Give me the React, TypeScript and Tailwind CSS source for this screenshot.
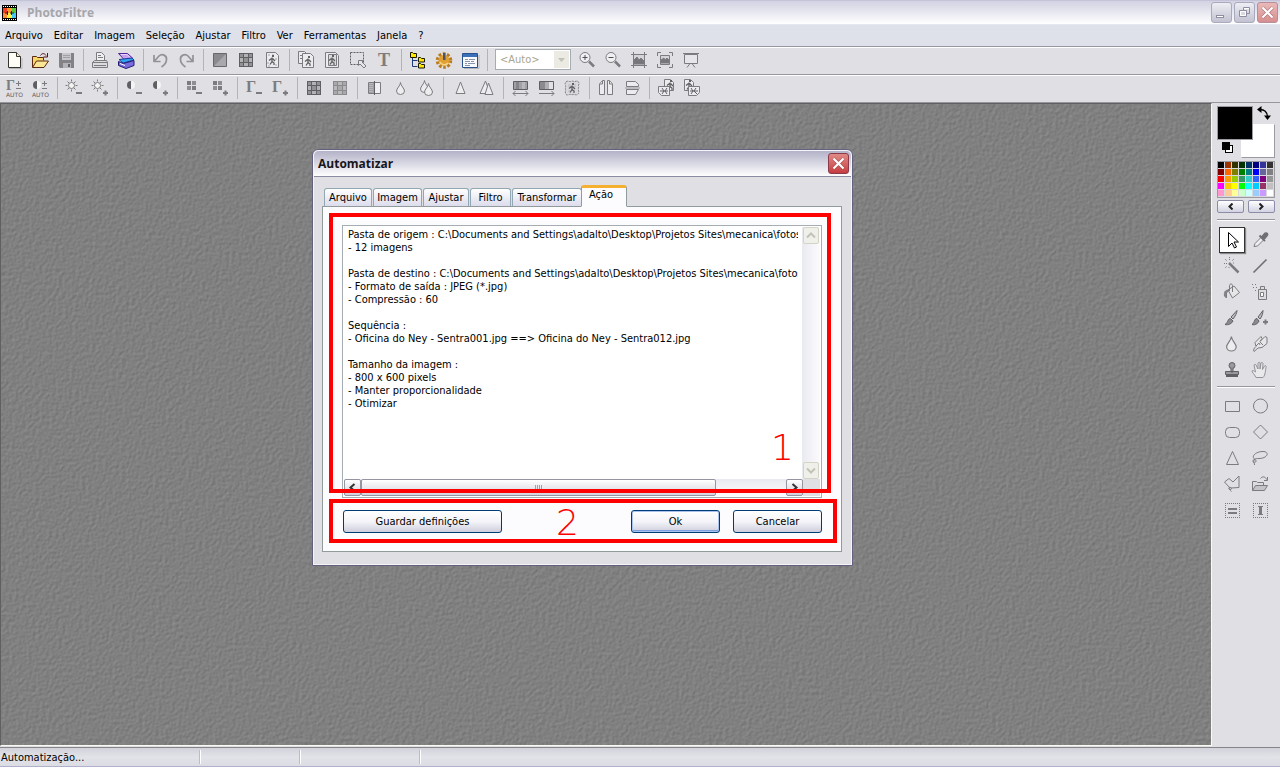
import type { ReactNode } from 'react';

const MENUS = ['Arquivo', 'Editar', 'Imagem', 'Seleção', 'Ajustar', 'Filtro', 'Ver', 'Ferramentas', 'Janela', '?'];

const REPORT = `Pasta de origem : C:\\Documents and Settings\\adalto\\Desktop\\Projetos Sites\\mecanica\\fotos\\sentra
- 12 imagens

Pasta de destino : C:\\Documents and Settings\\adalto\\Desktop\\Projetos Sites\\mecanica\\fotos\\sentra
- Formato de saída : JPEG (*.jpg)
- Compressão : 60

Sequência :
- Oficina do Ney - Sentra001.jpg ==> Oficina do Ney - Sentra012.jpg

Tamanho da imagem :
- 800 x 600 pixels
- Manter proporcionalidade
- Otimizar`;

const PALETTE = [
  '#000000', '#993300', '#333300', '#003300', '#003366', '#000080', '#333399', '#333333',
  '#800000', '#ff6600', '#808000', '#008000', '#008080', '#0000ff', '#666699', '#808080',
  '#ff0000', '#ff9900', '#99cc00', '#339966', '#33cccc', '#3366ff', '#800080', '#969696',
  '#ff00ff', '#ffcc00', '#ffff00', '#00ff00', '#00ffff', '#00ccff', '#993366', '#c0c0c0',
  '#ff99cc', '#ffcc99', '#ffff99', '#ccffcc', '#ccffff', '#99ccff', '#cc99ff', '#ffffff',
];

const G = '#7c7c80';
const L = '#c9c9cd';

// small walking figure used by the picture icons
function Walker({ x = 0, y = 0 }: { x?: number; y?: number }) {
  return (
    <g transform={`translate(${x} ${y})`} stroke="#606064" strokeWidth="1.3" fill="none">
      <path d="M5 2.5v4L3 9.500M5 6.500l2 1.500v2M2 5.500l2-1.500h2l2 2" />
      <rect x="5" y="0" width="2" height="2" fill="#606064" stroke="none" />
    </g>
  );
}

function Sheet({ x, y, w = 11, h = 13 }: { x: number; y: number; w?: number; h?: number }) {
  return (
    <path
      d={`M${x + 0.5} ${y + 0.5}h${w - 4}l3 3v${h - 4}h-${w - 1}z`}
      fill="#ececee"
      stroke={G}
    />
  );
}

function Plus({ x = 16, y = 15 }: { x?: number; y?: number }) {
  return <path d={`M${x - 3} ${y}h5M${x - 0.5} ${y - 2.5}v5`} stroke={G} strokeWidth="2" />;
}

function Minus() {
  return <path d="M12 15h6" stroke={G} strokeWidth="2" />;
}

function Sun() {
  return (
    <g stroke={G} fill="none">
      <circle cx="7.500" cy="7.500" r="3" fill="#f4f4f4" />
      <path d="M7.500 1.500v2M7.500 11.500v2M1.500 7.500h2M11.500 7.500h2M3.500 3.500l1.500 1.500M10 10l1.500 1.500M11.500 3.500L10 5M5 10l-1.500 1.500" />
    </g>
  );
}

function Contrast() {
  return (
    <g>
      <path d="M7 3a4 4 0 0 0 0 8z" fill="#606064" />
      <path d="M7 3a4 4 0 0 1 0 8z" fill="#f4f4f4" />
    </g>
  );
}

function Blocks() {
  return (
    <g fill={G}>
      <path d="M3 3h4v4H3zM8 8h4v4H8z" />
      <path d="M8 3h4v4H8zM3 8h4v4H3z" fill="#8f8f92" />
    </g>
  );
}

function Gamma({ x = 2, size = 14, y = 12 }: { x?: number; size?: number; y?: number }) {
  return (
    <text x={x} y={y} fontSize={size} fontWeight="bold" fill={G} fontFamily="Liberation Serif, serif">Γ</text>
  );
}

function AutoText() {
  return (
    <text x="2" y="19" fontSize="6" fill="#606064" fontFamily="DejaVu Sans, sans-serif">AUTO</text>
  );
}

function PlusMinus() {
  return <path d="M12 5.500h5M14.500 3v5M12 10.500h5" stroke={G} />;
}

function Grid({ light = false }: { light?: boolean }) {
  return (
    <g>
      <path d="M3 3h14v14H3z" fill={light ? '#8b8b8e' : '#606064'} />
      <path d="M4 4h3v3H4zM8 4h4v3H8zM13 4h3v3h-3zM4 8h3v4H4zM8 8h4v4H8zM13 8h3v4h-3zM4 13h3v3H4zM8 13h4v3H8zM13 13h3v3h-3z" fill={light ? '#a8a8ab' : '#929295'} />
      <path d="M8 4h4v3H8zM4 8h3v4H4zM13 8h3v4h-3zM8 13h4v3H8z" fill={light ? '#b9b9bb' : '#b3b3b6'} />
    </g>
  );
}

function Drop({ x, y = 4, s = 1 }: { x: number; y?: number; s?: number }) {
  return (
    <path
      transform={`translate(${x} ${y}) scale(${s})`}
      d="M4.500.500C4.500 3.500.500 6.500.500 9a4 3.500 0 0 0 8 0C8.500 6.500 4.500 3.500 4.500.500z"
      fill="#ededef"
      stroke={G}
    />
  );
}

const ICONS: Record<string, ReactNode> = {
  new: (
    <g>
      <path d="M5 18.500h13V8" stroke="#b5b5ba" fill="none" />
      <path d="M4.500 2.500h8l4 4v11h-12z" fill="#fffef6" stroke="#35352f" />
      <path d="M12.500 2.500v4h4" fill="#f4e8c4" stroke="#35352f" />
    </g>
  ),
  open: (
    <g>
      <path d="M2.500 17.500v-11h4l1 1h6v3" fill="#f7d768" stroke="#5a2a12" />
      <path d="M2.500 17.500l4-6.500h12l-4.500 6.500z" fill="#fbe695" stroke="#5a2a12" />
      <path d="M10.500 5.500c1.500-2.500 4-2.500 5.500 0M17.500 3v4h-4" stroke="#5a1210" fill="none" />
    </g>
  ),
  save: (
    <g>
      <path d="M3 3h15v15H4l-1-1z" fill="#838386" />
      <path d="M6 3h9v7H6z" fill="#c8c8cc" />
      <path d="M7 5.500h7M7 7.500h7" stroke="#a0a0a4" />
      <path d="M7 13h8v5H7z" fill="#b4b4b8" />
      <path d="M12 14h2v3h-2z" fill="#626266" />
    </g>
  ),
  print: (
    <g stroke={G}>
      <path d="M6.500 10.500v-8h5l3 3v5" fill="#f0f0f0" />
      <path d="M8 5.500h3M8 7.500h5" />
      <path d="M4.500 10.500h12l1 2v5h-15v-5z" fill="#dcdcdf" />
      <path d="M2.500 12.500h15M4 15.500h12" />
    </g>
  ),
  scan: (
    <g>
      <path d="M2.500 3.500h9l5.500 5-9 1z" fill="#c8a0f0" stroke="#50289a" />
      <path d="M5 4.500h6l3 3" stroke="#e8d0ff" fill="none" />
      <path d="M3 9.500l13-1.500 2 2-11 3z" fill="#2fa4f2" stroke="#1a3c98" />
      <path d="M2.500 11.500l5 2 10.500-3v5l-8 3-7.500-3z" fill="#7a6be0" stroke="#241c70" />
      <path d="M4 13.500l5 2" stroke="#fff" />
    </g>
  ),
  undo: <path d="M4 5v6.500h6.500M4.500 11L9 6c3-3 8-.500 7.500 3.500 0 3-2 5.500-5 7.500" stroke="#929296" strokeWidth="1.700" fill="none" />,
  redo: <path d="M17 5v6.500h-6.500M16.500 11L12 6C9 3 4 5.500 4.500 9.500c0 3 2 5.500 5 7.500" stroke="#929296" strokeWidth="1.700" fill="none" />,
  shade: (
    <g>
      <path d="M3.500 3.500h13v13h-13z" fill="#8b8b8f" stroke="#68686c" />
      <path d="M4 16L16 4v12z" fill="#a9a9ad" />
    </g>
  ),
  grid: <Grid />,
  gridLight: <Grid light />,
  figure: (
    <g>
      <Sheet x={4} y={2} w={13} h={16} />
      <path d="M6 4h2v2H6zM10 4h2v2h-2zM5 12h2v2H5zM13 8h2v2h-2zM13 14h2v2h-2zM6 15h2v2H6z" fill={L} />
      <Walker x={5} y={5} />
    </g>
  ),
  copyImage: (
    <g>
      <Sheet x={2} y={1} w={10} h={13} />
      <path d="M4 5.500h2M4 8.500h2" stroke={G} />
      <Sheet x={6} y={3} w={12} h={15} />
      <Walker x={7} y={6} />
    </g>
  ),
  frameImage: (
    <g>
      <Sheet x={3} y={2} w={14} h={16} />
      <path d="M6.500 4.500h8v11h-8z" fill="#dadadd" stroke={G} />
      <Walker x={5} y={5} />
    </g>
  ),
  selection: (
    <g>
      <path d="M2.500 2.500h13v12h-13z" fill="none" stroke="#606064" strokeDasharray="2 1" />
      <path d="M10.500 10.500h5l-1.500 1.500 4 4-2 2-4-4-1.500 1.500z" fill="#e6e6e8" stroke={G} />
    </g>
  ),
  text: <text x="4" y="16" fontSize="18" fontWeight="bold" fill={G} fontFamily="Liberation Serif, serif">T</text>,
  tree: (
    <g>
      <path d="M4.500 7v9.500h5M4.500 10.500h5" stroke="#1a3a7c" fill="none" />
      <path d="M2.500 2.500h2l1 1h3v4h-6zM10.500 7.500h2l1 1h3v3.500h-6zM10.500 13.500h2l1 1h3v3.500h-6z" fill="#ffe600" stroke="#191900" />
    </g>
  ),
  gear: (
    <g>
      <circle cx="10" cy="10.500" r="6.500" stroke="#b87a1c" strokeWidth="3.500" strokeDasharray="2.550 1.550" />
      <circle cx="10" cy="10.500" r="5.500" fill="#e0a034" />
      <path d="M6 12c1 3 6 4 8 1" stroke="#f7d78c" strokeWidth="1.500" />
      <path d="M9 3h2.500v7H9z" fill="#4a5668" />
    </g>
  ),
  window: (
    <g>
      <path d="M4 18.500h15V5" stroke="#b5b5ba" fill="none" />
      <path d="M2.500 3.500h15v14h-15z" fill="#f7f9ff" stroke="#28508f" />
      <path d="M3 4h14v3H3z" fill="#3c70b8" />
      <path d="M5 9.500h3M9 9.500h6M5 11.500h5M11 11.500h3M5 13.500h2M8 13.500h7M5 15.500h5" stroke="#8a93a8" />
    </g>
  ),
  zoomIn: (
    <g stroke={G} fill="none">
      <circle cx="8" cy="7.500" r="5" fill="#f0f0f2" />
      <path d="M5.500 7.500h5M8 5v5" stroke="#505054" />
      <path d="M12 11.500l5 5" strokeWidth="2.500" />
    </g>
  ),
  zoomOut: (
    <g stroke={G} fill="none">
      <circle cx="8" cy="7.500" r="5" fill="#f0f0f2" />
      <path d="M5.500 7.500h5" stroke="#505054" />
      <path d="M12 11.500l5 5" strokeWidth="2.500" />
    </g>
  ),
  fit: (
    <g stroke={G}>
      <path d="M4.500 4.500h11v11h-11z" fill="#d5d5d8" />
      <path d="M5 14v-4l3-3 2 3 2-2 3 3v3z" fill="#77777b" />
      <path d="M2 4.500h16M2 15.500h16M4.500 2v16M15.500 2v16" />
    </g>
  ),
  full: (
    <g stroke={G}>
      <path d="M5.500 5.500h9v9h-9z" fill="#d5d5d8" />
      <path d="M6 13v-3l3-2 1 2 2-2 2 2v3z" fill="#77777b" />
      <path d="M2.500 6V2.500H6M14 2.500h3.500V6M2.500 14v3.500H6M14 17.500h3.500V14" fill="none" />
    </g>
  ),
  screen: (
    <g stroke={G}>
      <path d="M3.500 4.500h13v9h-13z" fill="#e6e6ea" />
      <path d="M2 3.500h16M9 13.500l-3 4M11 13.500l3 4" fill="none" />
    </g>
  ),
  gammaAuto: <g><Gamma /><PlusMinus /><AutoText /></g>,
  contrastAuto: <g><Contrast /><PlusMinus /><AutoText /></g>,
  sunMinus: <g><Sun /><Minus /></g>,
  sunPlus: <g><Sun /><Plus /></g>,
  contrastMinus: <g><Contrast /><Minus /></g>,
  contrastPlus: <g><Contrast /><Plus /></g>,
  blocksMinus: <g><Blocks /><Minus /></g>,
  blocksPlus: <g><Blocks /><Plus /></g>,
  gammaMinus: <g><Gamma size={16} y={14} /><Minus /></g>,
  gammaPlus: <g><Gamma size={16} y={14} /><Plus /></g>,
  split: (
    <g>
      <path d="M4.500 4.500h12v11h-12z" fill="#f0f0f0" stroke={G} />
      <path d="M5 5h5v10H5z" fill="#a0a0a4" />
      <path d="M6 5v10M8 5v10" stroke="#d0d0d3" strokeDasharray="1 1" />
      <path d="M10.500 3v14" stroke="#606064" />
    </g>
  ),
  drop: <Drop x={6} />,
  drops: <g><Drop x={4} y={2} /><Drop x={8} y={5} /></g>,
  cone: <path d="M10.500 4L15 15.500H6z" fill="#ededef" stroke={G} />,
  cones: <g fill="#ededef" stroke={G}><path d="M9.500 3L14 15.500H4z" /><path d="M12.500 5L17 16.500H9z" /></g>,
  hueBar: (
    <g>
      <path d="M3.500 3.500h14v8h-14z" fill="#a2a2a6" stroke="#606064" />
      <path d="M6 4h3v7H6z" fill="#868689" /><path d="M12 4h3v7h-3z" fill="#b9b9bc" />
      <path d="M3 15.500h15M5.500 13L3 15.500 5.500 18M15.500 13l2.500 2.500-2.500 2.500" stroke={G} fill="none" />
    </g>
  ),
  gradBar: (
    <g>
      <path d="M3.500 3.500h14v8h-14z" fill="#8b8b8f" stroke="#606064" />
      <path d="M9 4h4v7H9z" fill="#b0b0b3" /><path d="M13 4h4v7h-4z" fill="#e2e2e4" />
      <path d="M3 15.500h15M15.500 13l2.500 2.500-2.500 2.500" stroke={G} fill="none" />
    </g>
  ),
  stamp: (
    <g>
      <path d="M4 4c2-2 3 0 4.500-.500s2-.500 3.500 0 3-1.500 4.500.500-.500 3 0 4.500-.500 2.500 0 4 .500 3-1 4-3-.500-4.500 0-2-.500-3.500 0-3.500 1-4-1 .500-2.500 0-4 .500-2.500 0-4S3 5 4 4z" fill="#d9d9dc" stroke={G} strokeDasharray="2 1" />
      <path d="M6 6h3v3H6zM12 6h2v3h-2zM6 12h2v2H6z" fill={L} />
      <Walker x={5} y={5} />
    </g>
  ),
  flipH: (
    <g stroke={G} fill="#ececee">
      <path d="M3.500 16.500V6l3-3.500h2v14zM11.500 2.500h2l3 3.500v10.500h-5z" />
      <path d="M6.500 3v3H4M13.500 3v3H16" />
    </g>
  ),
  flipV: (
    <g stroke={G} fill="#ececee">
      <path d="M4.500 8.500v-5h9l3 3v2zM4.500 11.500h12l-3 5h-9z" />
      <path d="M3 10h15" stroke="#99999d" />
    </g>
  ),
  rotL: (
    <g>
      <Sheet x={8} y={1} w={10} h={12} /><Walker x={9} y={2} />
      <path d="M2.500 8.500h11v9h-8l-3-3z" fill="#ececee" stroke={G} />
      <path d="M4 13h8M6 10l2 3-2 3M11 10l-2 3 2 3" stroke="#606064" fill="none" />
    </g>
  ),
  rotR: (
    <g>
      <Sheet x={2} y={1} w={10} h={12} /><Walker x={2} y={2} />
      <path d="M6.500 8.500h11v6l-3 3h-8z" fill="#ececee" stroke={G} />
      <path d="M8 13h8M14 10l-2 3 3 3M9 10l2 3-2 3" stroke="#606064" fill="none" />
    </g>
  ),
  pointer: <path d="M6.500 2.500v14l3.500-3.500 2.500 5 2-1-2.500-5h4.500z" fill="#fff" stroke="#000" />,
  picker: (
    <g>
      <path d="M4 16.500l1-3 6-6 2.500 2.500-6 6z" fill="#efeff1" stroke={G} />
      <path d="M9.500 5.500l5.500 5.500M12 7l3-3.500c2-1 3 .500 2 2L14 9z" fill="#707074" stroke="#707074" strokeWidth="2" />
    </g>
  ),
  wand: (
    <g stroke={G}>
      <path d="M7 7l9.500 9.500" strokeWidth="2.500" />
      <path d="M7.500 1v3M2 7.500h3M3 3l2 2M12 3l-2 2M3 12l2-2M7 11v2M11 7h2" strokeDasharray="1 1" />
    </g>
  ),
  line: <path d="M3.500 16.500l13-13" stroke="#747478" strokeWidth="1.700" />,
  bucket: (
    <g stroke={G} fill="#e6e6e9">
      <path d="M6 8l6-4 5.500 6.500-7 5.500z" /><path d="M10.500 10V3.500c0-2-3-2-3 0V9" fill="none" />
      <path d="M7 8c-4 0-5 2-4.500 6l2 2V11z" fill="#858589" />
    </g>
  ),
  spray: (
    <g stroke={G}>
      <path d="M2 2.500h6M3 5.500h6M5 8.500h3" strokeDasharray="1 2" />
      <path d="M8.500 7.500h8v10h-8zM10.500 7V4.500h4V7" fill="#dddde0" /><path d="M10.500 10.500h3v4h-3z" fill="#fff" />
    </g>
  ),
  brush: (
    <g stroke="#606064" fill="#bdbdc1">
      <path d="M15 2.500L9 9l2 2c2-2.500 4-6 4-8.500z" /><path d="M8.500 10.500c-3 0-2 4-5.500 6 3 1 7-1 8-3.500z" fill="#8b8b8f" />
    </g>
  ),
  brushPlus: (
    <g>
      <g stroke="#606064" fill="#bdbdc1">
        <path d="M13 2.500L8 9l2 2c2-2.500 3-6 3-8.500z" /><path d="M7 10.500c-3 0-2 4-5 6 3 1 6-1 7-3.500z" fill="#8b8b8f" />
      </g>
      <Plus x={16} y={14} />
    </g>
  ),
  blur: <Drop x={4} y={2} s={1.2} />,
  smudge: (
    <g stroke={G} fill="#e6e6e9">
      <path d="M4 17.500c-1-2 0-3 2-5l-1-4 6-6 1 2-2 3 5-5 2 1v6l-5 4-4 .500z" />
      <path d="M6 12l3-3 1 2M10 8l3 3" fill="none" />
    </g>
  ),
  clone: (
    <g stroke="#606064" fill="#9a9a9e">
      <circle cx="10" cy="5.500" r="3" /><path d="M9 8v4h2V8M3.500 11.500h13v3h-13z" /><path d="M4 16h12" strokeWidth="2" />
    </g>
  ),
  hand: (
    <path d="M6 17.500c-2-4-4-5-4-6.500 1-1 2 0 3.500 1L4 5c1-1.500 2-.500 2.500 1L8 9V3c1-1 2-1 2 0v6l1-6c1-1 2-.500 2 1l-.500 5.500L14.500 6c1-1 2 0 1.500 1.500-1 6-1 8-3 10z" fill="#e9e9ec" stroke="#939397" />
  ),
  rect: <path d="M3.500 5.500h14v10h-14z" fill="none" stroke={G} />,
  circle: <circle cx="10.500" cy="10" r="7" fill="none" stroke={G} />,
  rounded: <rect x="3.500" y="5.500" width="14" height="10" rx="4" fill="none" stroke={G} />,
  diamond: <path d="M10.500 3l7 7-7 7-7-7z" fill="none" stroke={G} />,
  triangle: <path d="M10.500 3.500l6 13h-12z" fill="none" stroke={G} />,
  lasso: <path d="M5 11.500C0 8 7 3 14 3.500c6 1 3 7-5 7-2 0-4 0-5 1.500-1 3 2 3 2 1s-3-2-3 0 2 2 1.500 4" fill="none" stroke={G} />,
  polyLasso: <path d="M7.500 13.500L2.500 8 7 4.500 11 8l6-6v11.500l-8 .500c-2-2-3 1-1 1.500s2-2 0-2 0 3 1.500 4" fill="none" stroke={G} />,
  load: (
    <g stroke={G} fill="#dddde0">
      <path d="M2.500 16.500v-9h4l1 1h6v3" /><path d="M2.500 16.500l3-5h12l-3 5z" fill="#c4c4c8" />
      <path d="M10.500 4.500c2-2.500 5-2 6 1M17.500 3v3.500H14" fill="none" />
    </g>
  ),
  lines: (
    <g stroke={G} fill="none">
      <path d="M3 3.500h15M3 17.500h15M3.500 3v15M17.500 3v15" strokeDasharray="1 1" />
      <path d="M6 9h9M6 13h9" strokeWidth="2" />
    </g>
  ),
  ibeam: (
    <g stroke={G} fill="none">
      <path d="M3 3.500h15M3 17.500h15M3.500 3v15M17.500 3v15" strokeDasharray="1 1" />
      <path d="M8 6.500h5M8 14.500h5" />
      <path d="M10.500 6v9" strokeWidth="3" />
    </g>
  ),
};

const FILE_BAR = [
  ['new', 'open', 'save'],
  ['print', 'scan'],
  ['undo', 'redo'],
  ['shade', 'grid', 'figure'],
  ['copyImage', 'frameImage', 'selection', 'text'],
  ['tree', 'gear', 'window'],
];
const ZOOM_TOOLS = ['zoomIn', 'zoomOut', 'fit', 'full', 'screen'];

const FILTER_BAR = [
  ['gammaAuto', 'contrastAuto'],
  ['sunMinus', 'sunPlus'],
  ['contrastMinus', 'contrastPlus'],
  ['blocksMinus', 'blocksPlus'],
  ['gammaMinus', 'gammaPlus'],
  ['grid', 'gridLight'],
  ['split', 'drop', 'drops'],
  ['cone', 'cones'],
  ['hueBar', 'gradBar', 'stamp'],
  ['flipH', 'flipV'],
  ['rotL', 'rotR'],
];

const TOOLS = ['pointer', 'picker', 'wand', 'line', 'bucket', 'spray', 'brush', 'brushPlus', 'blur', 'smudge', 'clone', 'hand'];
const SHAPES = ['rect', 'circle', 'rounded', 'diamond', 'triangle', 'lasso', 'polyLasso', 'load', 'lines', 'ibeam'];

function Icon({ name }: { name: string }) {
  return (
    <svg width="20" height="20" viewBox="0 0 20 20" fill="none" aria-hidden="true" className="overflow-visible">
      {ICONS[name]}
    </svg>
  );
}

function ToolButton({ name }: { name: string }) {
  return (
    <button type="button" aria-label={name} className="flex h-[26px] w-[26px] shrink-0 items-center justify-center">
      <Icon name={name} />
    </button>
  );
}

function Divider() {
  return (
    <div className="flex w-2 shrink-0 justify-center">
      <div className="h-[22px] w-px bg-[#b4b4b8]" />
    </div>
  );
}

function ToolGroups({ groups }: { groups: string[][] }) {
  return groups.map((group, index) => (
    <div key={index} className="flex items-center">
      {index > 0 && <Divider />}
      {group.map((name) => <ToolButton key={name} name={name} />)}
    </div>
  ));
}

function TitleBar() {
  return (
    <header className="flex h-[25px] items-center justify-between border-y border-t-[#c4c4d8] border-b-[#e6e6ee] bg-linear-to-b from-[#d2d2e2] to-white pr-[2px] pl-[2px]">
      <div className="flex items-center gap-[10px]">
        <svg width="15" height="16" viewBox="0 0 15 16" aria-hidden="true">
          <path d="M0 0h15v16H0z" fill="#000" />
          <path d="M1 1.500h14M1 14.500h14" stroke="#fff" strokeDasharray="1 1" />
          <path d="M1 3h4v5H1z" fill="#f33a22" />
          <path d="M5 3h5v5H5z" fill="#ff9a2a" />
          <path d="M10 3h4v5h-4z" fill="#5ac83c" />
          <path d="M1 8h4v5H1z" fill="#ff8a3a" />
          <path d="M5 8h5v5H5z" fill="#f8f23c" />
          <path d="M10 8h4v5h-4z" fill="#48c8f2" />
          <path d="M5.500 6v4M9.500 6v4M3 8h3M8 8h4" stroke="#222" />
        </svg>
        <h1 className="font-['Open_Sans',sans-serif] text-[12px] leading-4 font-bold text-[#a6a6aa]">PhotoFiltre</h1>
      </div>
      <div className="flex gap-[2px]">
        <button type="button" aria-label="Minimizar" className="flex h-[21px] w-[21px] items-end rounded-[3px] border border-[#a9a9bf] bg-linear-to-b from-[#eeeef4] to-[#c2c2d2] px-1 pb-1">
          <span className="h-[3px] w-[8px] border border-[#8e8ea0] bg-white" />
        </button>
        <button type="button" aria-label="Restaurar" className="flex h-[21px] w-[21px] items-center justify-center rounded-[3px] border border-[#a9a9bf] bg-linear-to-b from-[#eeeef4] to-[#c2c2d2]">
          <svg width="13" height="13" viewBox="0 0 13 13" fill="none">
            <path d="M5.500 4V1.500h6v6H9" stroke="#8e8ea0" />
            <path d="M6 2.500h5" stroke="#fff" />
            <path d="M1.500 4.500h7v6h-7z" fill="#d8d8e2" stroke="#8e8ea0" />
            <path d="M2.500 5.500h5v4h-5z" stroke="#fff" />
          </svg>
        </button>
        <button type="button" aria-label="Fechar" className="flex h-[21px] w-[21px] items-center justify-center rounded-[3px] border border-[#b88c98] bg-linear-to-b from-[#e9b9b9] to-[#d68f90]">
          <CloseMark />
        </button>
      </div>
    </header>
  );
}

function CloseMark() {
  return (
    <svg width="13" height="13" viewBox="0 0 13 13" aria-hidden="true">
      <path d="M1.500 1.500l10 10M11.500 1.500l-10 10" stroke="#7c3038" strokeWidth="3.500" opacity="0.4" />
      <path d="M1.500 1.500l10 10M11.500 1.500l-10 10" stroke="#fff" strokeWidth="2.200" />
    </svg>
  );
}

function SidePanel() {
  return (
    <aside className="flex w-[68px] shrink-0 flex-col px-[5px] pt-[3px]">
      <div className="relative h-[52px]">
        <div className="absolute top-[18px] left-6 h-[34px] w-[34px] border border-t-white border-r-[#9a9aa0] border-b-[#9a9aa0] border-l-white bg-white" />
        <div className="absolute top-0 left-0 h-[34px] w-[36px] border border-[#9a9aa0] bg-black" />
        <svg className="absolute top-0 left-10" width="14" height="14" viewBox="0 0 14 14" fill="none">
          <path d="M3 3.500c4 0 7 2 7.500 7" stroke="#000" strokeWidth="1.300" />
          <path d="M0 3.500L4.500 0v7zM10.500 14L7 9.500h7z" fill="#000" />
        </svg>
        <svg className="absolute top-[36px] left-[5px]" width="12" height="12" viewBox="0 0 12 12">
          <path d="M3 3h8v8H3z" fill="#000" />
          <path d="M4 4h6v6H4z" fill="#fff" />
          <path d="M0 0h8v8H0z" fill="#000" />
        </svg>
      </div>
      <div className="mt-[3px] grid h-[37px] w-[58px] grid-cols-8 border border-[#9a9aa0] bg-[#d8d8de]">
        {PALETTE.map((color) => (
          <button key={color} type="button" aria-label={color} className="mr-px mb-px" style={{ background: color }} />
        ))}
      </div>
      <div className="mt-[2px] flex w-[58px] gap-1">
        <button type="button" aria-label="Anterior" className="flex h-[13px] flex-1 items-center justify-center rounded-[2px] border border-[#8c8ca8] bg-linear-to-b from-white to-[#d3d3e2]">
          <svg width="5" height="7" viewBox="0 0 5 7"><path d="M4.500.500l-3 3 3 3" stroke="#222" strokeWidth="2" fill="none" /></svg>
        </button>
        <button type="button" aria-label="Próximo" className="flex h-[13px] flex-1 items-center justify-center rounded-[2px] border border-[#8c8ca8] bg-linear-to-b from-white to-[#d3d3e2]">
          <svg width="5" height="7" viewBox="0 0 5 7"><path d="M.500.500l3 3-3 3" stroke="#222" strokeWidth="2" fill="none" /></svg>
        </button>
      </div>
      <div className="mt-[6px] h-[2px] w-[58px] border-t border-[#96969c] bg-white" />
      <div className="mt-[6px] grid w-[56px] grid-cols-2 gap-x-[2px] pl-[2px]">
        {TOOLS.map((name) => (
          <button
            key={name}
            type="button"
            aria-label={name}
            aria-pressed={name === 'pointer'}
            className="flex h-[26px] w-[26px] items-center justify-center border border-transparent aria-pressed:border-[#333] aria-pressed:bg-white aria-pressed:shadow-[1px_1px_1px_#88888c]"
          >
            <Icon name={name} />
          </button>
        ))}
      </div>
      <div className="mt-[3px] h-[2px] w-[58px] border-t border-[#96969c] bg-white" />
      <div className="mt-[5px] grid w-[56px] grid-cols-2 gap-x-[2px] pl-[2px]">
        {SHAPES.map((name) => <ToolButton key={name} name={name} />)}
      </div>
    </aside>
  );
}

// embossed grey paper behind the windows
function Workspace() {
  return (
    <svg className="absolute inset-0 h-full w-full" aria-hidden="true">
      <filter id="paper" x="0" y="0" width="100%" height="100%" colorInterpolationFilters="sRGB">
        <feTurbulence type="fractalNoise" baseFrequency="0.3" numOctaves="2" seed="4" />
        <feDiffuseLighting surfaceScale="0.25" diffuseConstant="0.71" lightingColor="#fff">
          <feDistantLight azimuth="225" elevation="45" />
        </feDiffuseLighting>
      </filter>
      <rect width="100%" height="100%" filter="url(#paper)" />
    </svg>
  );
}

const TABS = ['Arquivo', 'Imagem', 'Ajustar', 'Filtro', 'Transformar', 'Ação'];
const TAB_WIDTHS = ['w-[48px]', 'w-[49px]', 'w-[46px]', 'w-[41px]', 'w-[70px]', 'w-[46px]'];

function Tabs() {
  return (
    <div role="tablist" className="flex h-[21px] items-end px-[2px]">
      {TABS.map((tab, index) =>
        tab === 'Ação' ? (
          <button key={tab} type="button" role="tab" aria-selected="true" className={`relative -mb-px -ml-[2px] h-[22px] rounded-t-[3px] border border-t-[3px] border-[#919b9c] border-t-[#f5b030] border-b-[#fcfcfe] bg-[#fcfcfe] pr-[6px] pb-1 leading-[14px] ${TAB_WIDTHS[index]}`}>
            {tab}
          </button>
        ) : (
          <button key={tab} type="button" role="tab" aria-selected="false" className={`mr-px h-[18px] rounded-t-[3px] border border-b-0 border-[#91a7b4] bg-linear-to-b from-white to-[#dcdcec] leading-[17px] ${TAB_WIDTHS[index]}`}>
            {tab}
          </button>
        ),
      )}
    </div>
  );
}

function ReportBox() {
  return (
    <div className="flex h-[273px] flex-col border border-[#a5acb2] bg-white p-px">
      <div className="flex min-h-0 flex-1">
        <textarea
          readOnly
          aria-label="Resumo da ação"
          wrap="off"
          value={REPORT}
          className="mr-1 min-w-0 flex-1 resize-none overflow-hidden pt-px pl-1 leading-[13px] whitespace-pre outline-none"
        />
        <div className="flex w-[18px] flex-col justify-between bg-linear-to-r from-[#e9e9f1] to-[#fbfbfe] pl-px">
          <button type="button" aria-label="Rolar para cima" className="flex h-[17px] w-4 items-center justify-center rounded-[2px] border border-[#d4d4c4] bg-[#f0f0ea]">
            <svg width="10" height="7" viewBox="0 0 10 7"><path d="M1 5.500l4-4 4 4" stroke="#c2c2b8" strokeWidth="2" fill="none" /></svg>
          </button>
          <button type="button" aria-label="Rolar para baixo" className="flex h-[17px] w-4 items-center justify-center rounded-[2px] border border-[#d4d4c4] bg-[#f0f0ea]">
            <svg width="10" height="7" viewBox="0 0 10 7"><path d="M1 1.500l4 4 4-4" stroke="#c2c2b8" strokeWidth="2" fill="none" /></svg>
          </button>
        </div>
      </div>
      <div className="flex h-[17px] bg-[#e0dfe3] pr-[17px]">
        <div className="flex flex-1 bg-linear-to-b from-[#e9e9f1] to-[#fbfbfe]">
          <button type="button" aria-label="Rolar para a esquerda" className="flex w-[17px] items-center justify-center rounded-[2px] border border-[#9494a2] bg-linear-to-b from-white to-[#d0d0dc]">
            <svg width="7" height="9" viewBox="0 0 7 9"><path d="M5.500 1l-4 3.500 4 3.500" stroke="#333" strokeWidth="2" fill="none" /></svg>
          </button>
          <div className="flex w-[355px] items-center justify-center gap-px rounded-[2px] border border-[#9494a2] bg-linear-to-b from-white to-[#d4d4de]">
            {[0, 1, 2, 3].map((n) => <span key={n} className="h-[6px] w-px bg-[#a0a0ac]" />)}
          </div>
          <button type="button" aria-label="Rolar para a direita" className="ml-auto flex w-[17px] items-center justify-center rounded-[2px] border border-[#9494a2] bg-linear-to-b from-white to-[#d0d0dc]">
            <svg width="7" height="9" viewBox="0 0 7 9"><path d="M1.500 1l4 3.500-4 3.500" stroke="#333" strokeWidth="2" fill="none" /></svg>
          </button>
        </div>
      </div>
    </div>
  );
}

function Dialog() {
  return (
    <section
      role="dialog"
      aria-label="Automatizar"
      className="absolute top-[45px] left-[311px] w-[541px] rounded-t-[6px] border border-[#62627e] bg-[#e0dfe3] p-px shadow-[inset_0_0_0_1px_#f4f4fa]"
    >
      <div className="flex h-[26px] items-center justify-between rounded-t-[5px] border-b border-[#8b8ba4] bg-linear-to-b from-[#b3b2c8] to-white pr-[2px] pl-1">
        <h2 className="font-['Open_Sans',sans-serif] text-[12px] leading-4 font-bold text-[#16161c]">Automatizar</h2>
        <button type="button" aria-label="Fechar" className="flex h-[21px] w-[21px] items-center justify-center rounded-[3px] border border-[#8a3a48] bg-linear-to-b from-[#e08a86] to-[#c63c40]">
          <CloseMark />
        </button>
      </div>
      <div className="pt-[8px] pr-[9px] pb-[12px] pl-2">
        <Tabs />
        <div className="border border-[#919b9c] bg-[#fcfcfe] px-[19px] pt-[18px] pb-[18px]">
          <ReportBox />
          <div className="mt-3 flex pl-px">
            <button type="button" className="h-[23px] w-[159px] rounded-[3px] border border-[#003c74] bg-linear-to-b from-white via-[#f4f4f9] to-[#cfcfdf]">Guardar definições</button>
            <button type="button" className="ml-auto h-[23px] w-[89px] rounded-[3px] border border-[#003c74] bg-linear-to-b from-white via-[#f4f4f9] to-[#cfcfdf] shadow-[inset_0_0_0_1px_#a9c3f0,inset_0_-2px_0_#7d9fe0]">Ok</button>
            <button type="button" className="ml-[13px] h-[23px] w-[89px] rounded-[3px] border border-[#003c74] bg-linear-to-b from-white via-[#f4f4f9] to-[#cfcfdf]">Cancelar</button>
          </div>
        </div>
      </div>
      <div className="pointer-events-none absolute top-[63px] left-[16px] h-[280px] w-[502px] border-4 border-[#ff0000]" />
      <div className="pointer-events-none absolute top-[349px] left-[16px] h-[44px] w-[508px] border-4 border-[#ff0000]" />
      <span className="pointer-events-none absolute top-[278px] left-[458px] font-['DejaVu_Sans_Light','DejaVu_Sans',sans-serif] text-[36px] leading-10 font-extralight text-[#ff0000]">1</span>
      <span className="pointer-events-none absolute top-[353px] left-[243px] font-['DejaVu_Sans_Light','DejaVu_Sans',sans-serif] text-[36px] leading-10 font-extralight text-[#ff0000]">2</span>
    </section>
  );
}

export default function App() {
  return (
    <div className="flex h-screen flex-col overflow-hidden bg-[#e0dfe3] font-['DejaVu_Sans_Condensed','DejaVu_Sans',sans-serif] text-[11px] leading-[13px] text-black">
      <TitleBar />
      <nav className="flex h-[21px] items-center gap-px bg-[#dee1ea]">
        {MENUS.map((menu) => (
          <button key={menu} type="button" className="px-[5px]">{menu}</button>
        ))}
      </nav>
      <div className="flex h-[28px] items-center border-t border-[#96969c] pb-[2px] pl-px shadow-[inset_0_1px_0_#fff]">
        <ToolGroups groups={FILE_BAR} />
        <Divider />
        <div className="relative mr-[3px] ml-1">
          <select disabled aria-label="Zoom" className="block h-[21px] w-[76px] appearance-none border border-[#a5acb2] bg-white pl-1 text-[#a8a590]">
            <option>&lt;Auto&gt;</option>
          </select>
          <span className="pointer-events-none absolute top-[2px] right-[2px] flex h-[17px] w-[15px] items-center justify-center bg-[#ebebe4]">
            <svg width="7" height="4" viewBox="0 0 7 4"><path d="M0 0h7L3.500 4z" fill="#c2c2b8" /></svg>
          </span>
        </div>
        {ZOOM_TOOLS.map((name) => <ToolButton key={name} name={name} />)}
      </div>
      <div className="flex h-[28px] items-center border-t border-[#96969c] pb-[2px] pl-px shadow-[inset_0_1px_0_#fff]">
        <ToolGroups groups={FILTER_BAR} />
      </div>
      <div className="flex min-h-0 flex-1 border-t border-[#96969c]">
        <main className="relative min-w-0 flex-1 overflow-hidden border-t border-r border-b border-l border-t-[#606060] border-r-[#fbfaf0] border-b-[#fbfaf0] border-l-[#606060] bg-[#808080]">
          <Workspace />
          <Dialog />
        </main>
        <SidePanel />
      </div>
      <footer className="mt-px flex h-[20px] items-stretch border-t border-b border-t-[#85858a] border-b-[#b0b0cc] bg-linear-to-b from-[#d2d3da] via-[#e2e3e9] to-[#dcdde4] py-[2px]">
        <span className="w-[199px] truncate pl-px leading-[15px]">Automatização...</span>
        <span className="w-[100px] border-l border-[#c4bfa0] shadow-[inset_1px_0_0_#fff]" />
        <span className="w-[120px] border-l border-[#c4bfa0] shadow-[inset_1px_0_0_#fff]" />
        <span className="flex-1 border-l border-[#c4bfa0] shadow-[inset_1px_0_0_#fff]" />
      </footer>
    </div>
  );
}
